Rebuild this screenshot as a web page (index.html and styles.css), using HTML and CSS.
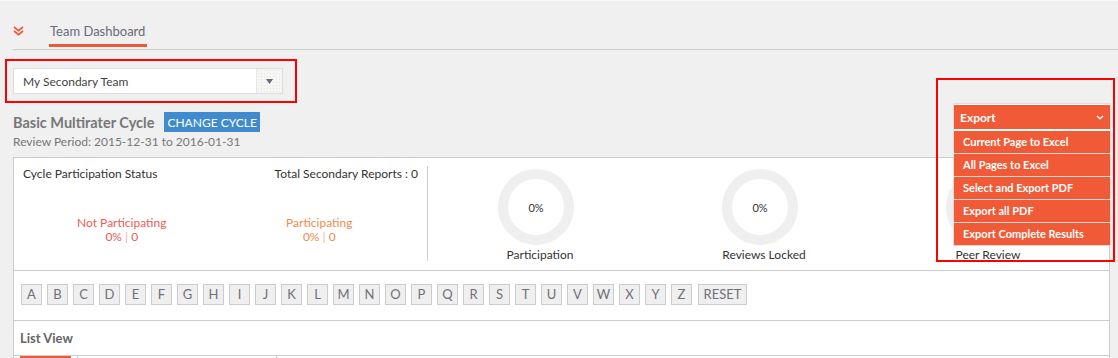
FILE: index.html
```html
<!DOCTYPE html>
<html>
<head>
<meta charset="utf-8">
<link rel="stylesheet" href="styles.css">
</head>
<body>
<div class="topstrip"></div>
<div class="topbar">
  <svg class="chev" width="11" height="10" viewBox="0 0 11 10"><path d="M1 1 L5.5 4.6 L10 1 M1 5 L5.5 8.6 L10 5" fill="none" stroke="#f05a36" stroke-width="1.7"/></svg>
  <div class="tab">Team Dashboard</div>
</div>

<div class="select-frame">
  <div class="select">
    <span class="select-text">My Secondary Team</span>
    <span class="select-btn"><svg width="7" height="5" viewBox="0 0 7 5"><path d="M0 0 H7 L3.5 5 Z" fill="#6b6b7b"/></svg></span>
  </div>
</div>

<div class="cycle-row">
  <span class="cycle-title">Basic Multirater Cycle</span>
  <span class="btn-cycle">CHANGE CYCLE</span>
</div>
<div class="review">Review Period: 2015-12-31 to 2016-01-31</div>

<div class="panel">
  <div class="row1">
    <div class="status">
      <div class="status-head">
        <span>Cycle Participation Status</span>
        <span>Total Secondary Reports : 0</span>
      </div>
      <div class="status-cols">
        <div class="scol not"><div>Not Participating</div><div>0% <span class="bar">|</span> 0</div></div>
        <div class="scol yes"><div>Participating</div><div>0% <span class="bar">|</span> 0</div></div>
      </div>
    </div>
    <div class="charts">
      <div class="chart"><div class="donut">0%</div><div class="clabel">Participation</div></div>
      <div class="chart"><div class="donut">0%</div><div class="clabel">Reviews Locked</div></div>
      <div class="chart"><div class="donut">0%</div><div class="clabel">Peer Review</div></div>
    </div>
  </div>
  <div class="row2">
    <span class="ltr">A</span><span class="ltr">B</span><span class="ltr">C</span><span class="ltr">D</span><span class="ltr">E</span><span class="ltr">F</span><span class="ltr">G</span><span class="ltr">H</span><span class="ltr">I</span><span class="ltr">J</span><span class="ltr">K</span><span class="ltr">L</span><span class="ltr">M</span><span class="ltr">N</span><span class="ltr">O</span><span class="ltr">P</span><span class="ltr">Q</span><span class="ltr">R</span><span class="ltr">S</span><span class="ltr">T</span><span class="ltr">U</span><span class="ltr">V</span><span class="ltr">W</span><span class="ltr">X</span><span class="ltr">Y</span><span class="ltr">Z</span><span class="ltr reset">RESET</span>
  </div>
  <div class="row3">
    <div class="listview">List View</div>
    <div class="thead">
      <div class="th th1"><span class="th-active"></span></div>
      <div class="th th2"></div>
      <div class="th th3"></div>
    </div>
  </div>
</div>

<div class="export">
  <div class="export-btn"><span>Export</span><svg width="8" height="5" viewBox="0 0 8 5"><path d="M1 1 L4 3.8 L7 1" fill="none" stroke="#fff" stroke-width="1.5"/></svg></div>
  <div class="export-item">Current Page to Excel</div>
  <div class="export-item">All Pages to Excel</div>
  <div class="export-item">Select and Export PDF</div>
  <div class="export-item">Export all PDF</div>
  <div class="export-item">Export Complete Results</div>
</div>
<div class="mark-export"></div>
</body>
</html>
```

FILE: styles.css
```css
* { box-sizing: border-box; }
html, body { margin: 0; padding: 0; }
body {
  background: #f0f0f0;
  font-family: Lato, "Open Sans", sans-serif;
  color: #333;
  width: 1118px;
  height: 358px;
  overflow: hidden;
  position: relative;
}
.topstrip { height: 1px; background: #f8f8f8; }
.topbar {
  display: flex;
  height: 49px;
  margin-left: 13px;
  border-bottom: 1px solid #cfcfcf;
}
.chev { margin-top: 25px; flex: none; }
.tab {
  margin-left: 25px;
  margin-top: 22px;
  height: 24px;
  padding: 0 2px 0 1px;
  white-space: nowrap;
  line-height: 16px;
  font-size: 13px;
  color: #6a6a78;
  border-bottom: 3px solid #ea5a3a;
}

.select-frame {
  margin: 9px 0 0 5px;
  width: 292px;
  height: 44px;
  border: 2px solid #f00;
  padding: 7px 12px 7px 6px;
}
.select {
  display: flex;
  height: 26px;
  background: #fff;
  border: 1px solid #ddd;
}
.select-text {
  flex: 1;
  padding: 1px 0 0 9px;
  font-size: 12px;
  line-height: 24px;
  color: #444;
}
.select-btn {
  width: 26px;
  border-left: 1px solid #e6e6e6;
  background: #f6f6f4;
  background-image: radial-gradient(#e4e4e4 0.6px, transparent 0.7px);
  background-size: 3px 3px;
  display: flex;
  align-items: center;
  justify-content: center;
}

.cycle-row {
  display: flex;
  align-items: center;
  margin: 9px 0 0 13px;
  height: 20px;
}
.cycle-title {
  font-size: 14.5px;
  font-weight: bold;
  color: #777;
  margin-right: 10px;
  white-space: nowrap;
}
.btn-cycle {
  background: #3f8bcd;
  color: #fff;
  font-size: 12px;
  height: 20px;
  line-height: 21px;
  padding: 0 3px;
  white-space: nowrap;
}
.review {
  margin: 2px 0 0 13px;
  font-size: 12px;
  line-height: 16px;
  color: #777;
}

.panel {
  margin: 7px 8px 0 13px;
  background: #fff;
  border: 1px solid #ccc;
}
.row1 {
  display: flex;
  height: 113px;
  border-bottom: 1px solid #ccc;
}
.status {
  width: 414px;
  margin: 8px 0 9px;
  padding: 0 9px;
  border-right: 1px solid #ccc;
  font-size: 12px;
}
.status-head {
  display: flex;
  justify-content: space-between;
  line-height: 16px;
  color: #333;
}
.status-cols {
  display: flex;
  margin-top: 34px;
}
.scol {
  flex: 1;
  text-align: center;
  line-height: 14px;
}
.scol.not { color: #ee5a55; }
.scol.yes { color: #f28b4e; }
.bar { color: #f4a6b4; }

.charts {
  display: flex;
  flex: 1;
  padding-top: 11px;
}
.chart {
  width: 224px;
  display: flex;
  flex-direction: column;
  align-items: center;
}
.donut {
  width: 76px;
  height: 76px;
  border-radius: 50%;
  border: 10px solid #efefef;
  margin-right: 8px;
  display: flex;
  align-items: center;
  justify-content: center;
  font-size: 11px;
  color: #333;
}
.clabel {
  margin-top: 3px;
  font-size: 12px;
  line-height: 14px;
  color: #333;
}

.row2 {
  display: flex;
  height: 50px;
  padding: 13px 0 0 7px;
  border-bottom: 1px solid #ccc;
}
.ltr {
  width: 21px;
  height: 21px;
  margin-right: 5px;
  background: #efefef;
  border: 1px solid #ccc;
  font-size: 13px;
  line-height: 19px;
  text-align: center;
  color: #707078;
}
.ltr.reset { width: 49px; margin-left: 1px; }

.row3 { height: 40px; }
.listview {
  padding: 9px 0 0 6px;
  font-size: 13px;
  font-weight: bold;
  line-height: 16px;
  color: #666;
}
.thead {
  display: flex;
  margin-top: 9px;
  border-top: 1px solid #ccc;
  height: 10px;
}
.th { border-right: 1px solid #ccc; }
.th1 { width: 64px; padding-left: 6px; }
.th2 { width: 199px; }
.th3 { flex: 1; border-right: none; }
.th-active { display: block; width: 51px; height: 3px; background: #ea5a3a; }

.export {
  position: absolute;
  left: 953px;
  top: 103px;
  width: 158px;
  background: #fff;
  border: 1px solid #ddd;
  border-bottom: none;
  padding-top: 1px;
}
.export-btn {
  display: flex;
  align-items: center;
  justify-content: space-between;
  height: 24px;
  padding: 0 6px 0 6px;
  margin-bottom: 2px;
  background: #f05a36;
  color: #fff;
  font-size: 12px;
  font-weight: bold;
}
.export-item {
  height: 23px;
  line-height: 22px;
  padding-left: 9px;
  background: #f05a36;
  color: #fff;
  font-size: 11px;
  font-weight: bold;
  border-bottom: 1px solid #d9d9d9;
}
.mark-export {
  position: absolute;
  left: 936px;
  top: 78px;
  width: 179px;
  height: 184px;
  border: 2px solid #f00;
}
```
